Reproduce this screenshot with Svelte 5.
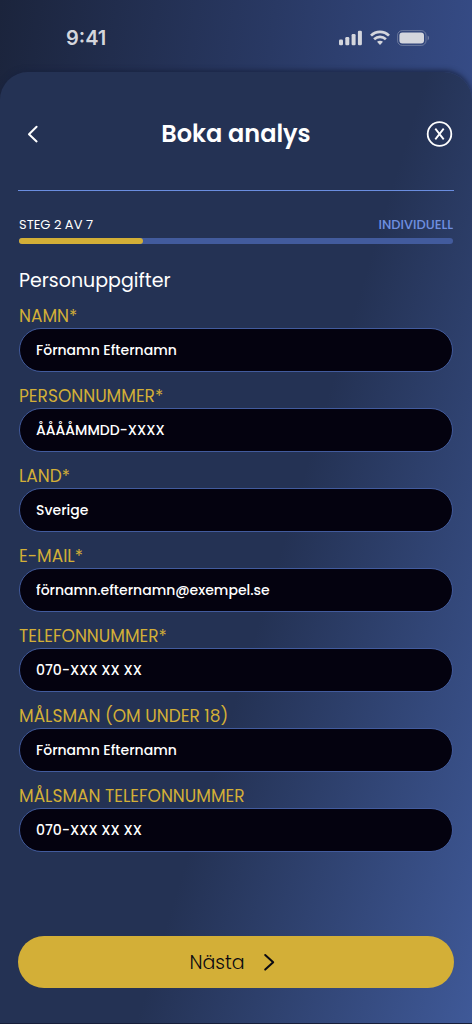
<script>
    const step = 2;
    const totalSteps = 7;

    let fields = [
        { id: 'name', label: 'Namn*', type: 'text', value: 'Förnamn Efternamn' },
        { id: 'ssn', label: 'Personnummer*', type: 'text', value: 'ÅÅÅÅMMDD-XXXX' },
        { id: 'country', label: 'Land*', type: 'text', value: 'Sverige' },
        { id: 'email', label: 'E-mail*', type: 'text', value: 'förnamn.efternamn@exempel.se' },
        { id: 'phone', label: 'Telefonnummer*', type: 'tel', value: '070-XXX XX XX' },
        { id: 'guardian', label: 'Målsman (om under 18)', type: 'text', value: 'Förnamn Efternamn' },
        { id: 'guardian-phone', label: 'Målsman telefonnummer', type: 'tel', value: '070-XXX XX XX' }
    ];
</script>

<div class="screen">
    <div class="status-bar">
        <span class="time">9:41</span>
        <div class="status-icons">
            <svg width="24" height="16" viewBox="0 0 24 16" fill="currentColor">
                <rect x="0" y="9.5" width="4" height="5.8" rx="1.2" />
                <rect x="6.3" y="7" width="4" height="8.3" rx="1.2" />
                <rect x="12.6" y="4" width="4" height="11.3" rx="1.2" />
                <rect x="18.9" y="0.8" width="4" height="14.5" rx="1.2" />
            </svg>
            <svg width="20" height="16" viewBox="0 0 20 16" fill="none" stroke="currentColor" stroke-width="2.7">
                <path d="M1 5.6C6 .6 14 .6 19 5.6" />
                <path d="M4.1 9.2C7.5 6 12.5 6 15.9 9.2" />
                <path d="M7 11.8C8.8 10.3 11.2 10.3 13 11.8L10 15Z" fill="currentColor" stroke="none" />
            </svg>
            <svg width="33" height="16" viewBox="0 0 33 16" fill="currentColor">
                <rect x="0.6" y="0.6" width="28.4" height="14.8" rx="4.6" fill="none" stroke="currentColor" stroke-opacity="0.35" />
                <rect x="2.4" y="2.6" width="24.6" height="10.8" rx="3" />
                <path d="M30.6 5.6V10.4C32.5 9.6 32.5 6.4 30.6 5.6Z" opacity="0.4" />
            </svg>
        </div>
    </div>

    <main class="sheet">
        <header class="header">
            <button class="icon-button" type="button" aria-label="Tillbaka">
                <svg width="28" height="28" viewBox="0 0 28 28" fill="none" stroke="currentColor" stroke-width="2" stroke-linecap="round" stroke-linejoin="round">
                    <path d="M18.6 6.8L11 14.2L18.6 21.4" />
                </svg>
            </button>
            <h1>Boka analys</h1>
            <button class="icon-button" type="button" aria-label="Stäng">
                <svg width="28" height="28" viewBox="0 0 28 28" fill="none" stroke="currentColor" stroke-width="1.8">
                    <circle cx="13.5" cy="14" r="11.8" />
                    <path d="M9.3 8.6L17.7 19.4M17.7 8.6L9.3 19.4" />
                </svg>
            </button>
        </header>

        <div class="steps">
            <span>Steg {step} av {totalSteps}</span>
            <span class="plan">Individuell</span>
        </div>
        <div class="progress">
            <div class="progress-fill" style="width: {(step / totalSteps) * 100}%"></div>
        </div>

        <form class="form" on:submit|preventDefault>
            <h2>Personuppgifter</h2>
            <div class="fields">
                {#each fields as field (field.id)}
                    <div class="field">
                        <label for={field.id}>{field.label}</label>
                        <input id={field.id} type={field.type} value={field.value} />
                    </div>
                {/each}
            </div>

            <button class="next-button" type="submit">
                Nästa
                <svg width="28" height="28" viewBox="0 0 28 28" fill="none" stroke="currentColor" stroke-width="2" stroke-linecap="round" stroke-linejoin="round">
                    <path d="M10.2 7L18.2 14.2L10.2 21.6" />
                </svg>
            </button>
        </form>
    </main>
</div>

<style>
    :global(body) {
        background-color: #1b243c;
    }

    .screen {
        display: flex;
        flex-direction: column;
        min-height: 100vh;
        box-sizing: border-box;
        border-bottom: 1px solid #17203a;
        background: linear-gradient(98deg, #1b243c 0%, #293964 45%, #364c87 80%, #39538e 100%);
        font-family: 'Poppins', 'Inter', sans-serif;
        color: #fff;
    }

    .status-bar {
        display: flex;
        justify-content: space-between;
        align-items: center;
        height: 72px;
        padding: 4px 42px 0 66px;
        box-sizing: border-box;
        color: #d4d6dd;
    }

    .time {
        font-family: 'Inter', sans-serif;
        font-size: 20px;
        font-weight: 600;
        line-height: 24px;
    }

    .status-icons {
        display: flex;
        align-items: center;
        gap: 7px;
    }

    .sheet {
        flex: 1;
        display: flex;
        flex-direction: column;
        padding: 0 18px 35px;
        border-radius: 28px 28px 0 0;
        background: linear-gradient(107deg, #243254 56%, #3f5998 100%);
        box-shadow: 0 -2px 5px rgba(24, 34, 62, 0.8);
    }

    .header {
        display: flex;
        align-items: center;
        justify-content: space-between;
        height: 119px;
        padding-top: 6px;
        box-sizing: border-box;
        border-bottom: 1px solid #6a8de0;
    }

    h1 {
        margin: 0;
        font-size: 24px;
        font-weight: 600;
        line-height: 32px;
    }

    .icon-button {
        display: flex;
        padding: 0;
        border: none;
        background: none;
        color: inherit;
        cursor: pointer;
    }

    .steps {
        display: flex;
        justify-content: space-between;
        margin-top: 24px;
        padding: 0 1px;
        font-size: 13px;
        line-height: 20px;
        text-transform: uppercase;
    }

    .plan {
        font-weight: 500;
        color: #6f8fe0;
    }

    .progress {
        height: 6px;
        margin: 3px 1px 0;
        border-radius: 3px;
        background-color: #425b9d;
    }

    .progress-fill {
        height: 100%;
        border-radius: 3px;
        background-color: #d3af37;
    }

    .form {
        flex: 1;
        display: flex;
        flex-direction: column;
    }

    h2 {
        margin: 23px 1px 9px;
        font-size: 19px;
        font-weight: 400;
        line-height: 28px;
    }

    .fields {
        display: flex;
        flex-direction: column;
        gap: 12px;
        padding: 0 1px;
    }

    .field {
        display: flex;
        flex-direction: column;
    }

    label {
        font-size: 17px;
        line-height: 24px;
        color: #d3af37;
        text-transform: uppercase;
    }

    input {
        width: 100%;
        height: 44px;
        padding: 0 16px;
        box-sizing: border-box;
        border: 1px solid #425b9d;
        border-radius: 22px;
        background-color: #04020f;
        font-family: inherit;
        font-size: 14px;
        font-weight: 500;
        color: #fff;
    }

    .next-button {
        display: flex;
        align-items: center;
        justify-content: center;
        gap: 10px;
        height: 52px;
        margin-top: auto;
        border: none;
        border-radius: 26px;
        background-color: #d3af37;
        font-family: inherit;
        font-size: 19px;
        font-weight: 300;
        color: #0b0a12;
        cursor: pointer;
    }
</style>
